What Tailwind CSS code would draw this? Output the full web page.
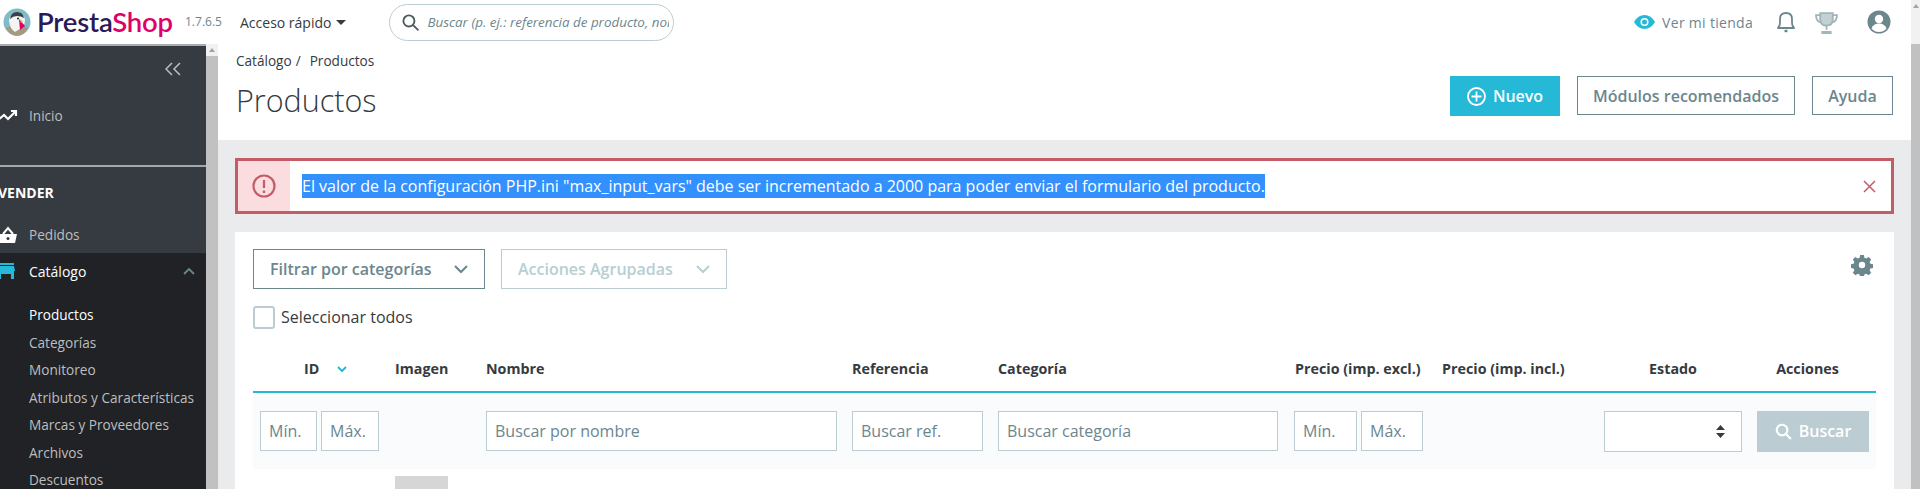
<!DOCTYPE html>
<html lang="es">
<head>
    <meta charset="UTF-8">
    <meta name="viewport" content="width=device-width, initial-scale=1.0">
    <title>Productos - PrestaShop</title>
    <script src="https://cdn.jsdelivr.net/npm/@tailwindcss/browser@4"></script>
</head>
<body class="h-[489px] overflow-hidden bg-white font-['Open_Sans',sans-serif] text-[#363a41]">
    <!-- Top bar -->
    <header class="flex h-[44px] items-center bg-white">
        <svg class="ml-[3px] h-[28px] w-[28px] shrink-0" viewBox="0 0 28 28">
            <circle cx="14" cy="14" r="13.5" fill="#7fbcc6"/>
            <path d="M3 20q11-6 22 0q-4 8-11 8t-11-8z" fill="#a39a80"/>
            <path d="M6 13q1-8 8-8t8 7q0 4-2 7l-8 5q-5-3-6-11z" fill="#f4f4f4"/>
            <path d="M7 11q1-7 7-7t7 6q-3-2-7-2t-7 3z" fill="#3d3f47"/>
            <path d="M16 11l6 7-5 4z" fill="#df0067"/>
            <path d="M17 11l3 3-2 1z" fill="#f5a623"/>
            <circle cx="15" cy="10.5" r="1" fill="#222"/>
        </svg>
        <div class="ml-[6px] w-[136px] font-['Lato',sans-serif] text-[27.500px] leading-[32px] font-semibold tracking-[-0.2px] whitespace-nowrap text-[#2b1a5a]">Presta<span class="text-[#df0067]">Shop</span></div>
        <span class="ml-[12px] w-[36px] text-[12px] whitespace-nowrap text-[#6c868e]">1.7.6.5</span>
        <span class="ml-[19px] text-[14px] whitespace-nowrap">Acceso rápido</span>
        <svg class="ml-[5px] h-[5px] w-[10px]" viewBox="0 0 10 5"><path d="M0 0h10L5 5z" fill="#363a41"/></svg>
        <div class="ml-[43px] flex h-[37px] w-[285px] items-center overflow-hidden rounded-full border border-[#bbcdd2] pr-[4px] pl-[11px]">
            <svg class="h-[19px] w-[19px] shrink-0" viewBox="0 0 24 24" fill="none" stroke="#4f5b60" stroke-width="2.4"><circle cx="10" cy="10" r="7"/><path d="M15 15l7 7"/></svg>
            <span class="ml-[7px] overflow-hidden text-[13.400px] whitespace-nowrap text-[#6c868e] italic">Buscar (p. ej.: referencia de producto, nombre de cliente…)</span>
        </div>
        <div class="ml-auto flex items-center">
            <svg class="h-[14px] w-[21px]" viewBox="0 0 21 14"><path d="M0 7q4-7 10.500-7T21 7q-4 7-10.500 7T0 7z" fill="#25b9d7"/><circle cx="10.500" cy="7" r="4" fill="#fff"/><circle cx="10.500" cy="7" r="2.500" fill="#25b9d7"/></svg>
            <span class="ml-[7px] text-[14px] tracking-[0.3px] whitespace-nowrap text-[#6c868e]">Ver mi tienda</span>
            <svg class="ml-[24px] h-[22px] w-[18px]" viewBox="0 0 18 22" fill="none" stroke="#6c868e" stroke-width="1.800"><path d="M1 17q2-2 2-5V8q0-6 6-6t6 6v4q0 3 2 5z" stroke-linejoin="round"/><path d="M7.500 20h3" stroke-width="2.400"/></svg>
            <svg class="ml-[20px] h-[23px] w-[23px]" viewBox="0 0 22 22" fill="none" stroke="#a3b5ba" stroke-width="1.800"><path d="M5 2h12v6q0 6-6 6t-6-6z" fill="#c3d0d4"/><path d="M5 4H1q0 6 5 7M17 4h4q0 6-5 7M11 14v4M7 20h8v1H7z"/></svg>
            <svg class="mr-[20px] ml-[29px] h-[24px] w-[24px]" viewBox="0 0 24 24"><circle cx="12" cy="12" r="11.500" fill="#6c868e"/><circle cx="12" cy="9" r="4.200" fill="#fff"/><path d="M4.500 18.500q2-5 7.500-5t7.500 5q-3 3.500-7.500 3.500t-7.500-3.500z" fill="#fff"/></svg>
        </div>
        <div class="flex h-[44px] w-[9px] shrink-0 justify-center bg-[#f1f1f1] pt-[4px]">
            <svg class="h-[4px] w-[6px]" viewBox="0 0 6 4"><path d="M0 4l3-4 3 4z" fill="#a3a3a3"/></svg>
        </div>
    </header>

    <div class="flex h-[445px]">
        <!-- Sidebar -->
        <aside class="w-[206px] shrink-0 overflow-hidden border-t-2 border-[#a9adb0] bg-[#363a41] text-[13.600px] text-[#bebebe]">
            <div class="flex h-[30px] items-end justify-end pr-[25px]">
                <svg class="h-[14px] w-[16px]" viewBox="0 0 16 14" fill="none" stroke="#bebebe" stroke-width="1.500"><path d="M7 1L1 7l6 6M15 1L9 7l6 6"/></svg>
            </div>
            <div class="mt-[26px] flex h-[28px] items-center">
                <svg class="h-[12px] w-[18px] shrink-0" viewBox="0 0 18 12" fill="none" stroke="#fff" stroke-width="2.200"><path d="M-2 10l6-5 4 4 7-7M11 1h5v5"/></svg>
                <span class="ml-[11px]">Inicio</span>
            </div>
            <div class="mt-[35px] h-[2px] bg-[#a0aaae]"></div>
            <div class="mt-[16px] -ml-[2px] h-[20px] text-[14px] leading-[20px] font-bold text-white">VENDER</div>
            <div class="mt-[22px] flex h-[20px] items-center">
                <svg class="h-[18px] w-[18px] shrink-0" viewBox="0 0 18 18"><path d="M-2 8h19l-2 9H0z" fill="#fff"/><path d="M3 8l5-6 5 6" fill="none" stroke="#fff" stroke-width="2"/><circle cx="8" cy="12.500" r="1.500" fill="#363a41"/></svg>
                <span class="ml-[11px]">Pedidos</span>
            </div>
            <div class="mt-[8px] h-[240px] bg-[#202226]">
                <div class="flex h-[36px] items-center text-white">
                    <svg class="h-[16px] w-[16px] shrink-0" viewBox="0 0 16 16"><path d="M-2 0h16v2H-2zM-2 3h16l1 5H-2z" fill="#25b9d7"/><path d="M-1 8h2v8h-2zM11 8h3v8h-3zM1 8h10v3H1z" fill="#25b9d7"/></svg>
                    <span class="ml-[13px] text-[14px]">Catálogo</span>
                    <svg class="mr-[11px] ml-auto h-[7px] w-[12px]" viewBox="0 0 12 7" fill="none" stroke="#6c868e" stroke-width="1.800"><path d="M1 6l5-5 5 5"/></svg>
                </div>
                <div class="mt-[12px] flex flex-col pl-[29px] leading-[27.500px] whitespace-nowrap">
                    <span class="text-white">Productos</span>
                    <span>Categorías</span>
                    <span>Monitoreo</span>
                    <span>Atributos y Características</span>
                    <span>Marcas y Proveedores</span>
                    <span>Archivos</span>
                    <span>Descuentos</span>
                </div>
            </div>
        </aside>
        <!-- Sidebar scrollbar -->
        <div class="flex w-[12px] shrink-0 flex-col bg-[#f1f1f1]">
            <div class="flex h-[12px] justify-center pt-[4px]">
                <svg class="h-[4px] w-[6px]" viewBox="0 0 6 4"><path d="M0 4l3-4 3 4z" fill="#a3a3a3"/></svg>
            </div>
            <div class="flex-1 bg-[#c1c1c1]"></div>
        </div>

        <!-- Main -->
        <main class="flex w-[1693px] shrink-0 flex-col bg-[#eaebec]">
            <div class="flex h-[96px] shrink-0 justify-between bg-white px-[18px]">
                <div>
                    <div class="mt-[7px] flex h-[20px] items-center text-[13.600px]">Catálogo<span class="mr-[9px] ml-[4px]">/</span>Productos</div>
                    <h1 class="mt-[9px] text-[30.500px] leading-[40px] font-light">Productos</h1>
                </div>
                <div class="flex items-start gap-[17px] pt-[32px] text-[16px] font-semibold">
                    <div class="flex h-[40px] w-[110px] items-center justify-center gap-[7px] bg-[#25b9d7] text-white">
                        <svg class="h-[19px] w-[19px]" viewBox="0 0 19 19" fill="none" stroke="#fff" stroke-width="1.800"><circle cx="9.500" cy="9.500" r="8.500"/><path d="M9.500 4.500v10M4.500 9.500h10"/></svg>
                        Nuevo
                    </div>
                    <div class="flex h-[39px] w-[218px] items-center justify-center border border-[#6c868e] text-[#6c868e]">Módulos recomendados</div>
                    <div class="flex h-[39px] w-[81px] items-center justify-center border border-[#6c868e] text-[#6c868e]">Ayuda</div>
                </div>
            </div>

            <div class="px-[17px] pt-[18px]">
                <!-- Alert -->
                <div class="flex h-[56px] items-center border-[3px] border-[#c45c67] bg-white">
                    <div class="flex h-full w-[52px] items-center justify-center bg-[#fbdcdf]">
                        <svg class="h-[24px] w-[24px]" viewBox="0 0 24 24" fill="none" stroke="#c45c67" stroke-width="2.200"><circle cx="12" cy="12" r="10.500"/><path d="M12 6v8M12 16.500v2.500"/></svg>
                    </div>
                    <span class="ml-[12px] bg-[#3390ff] text-[16px] leading-[24px] tracking-[-0.01px] whitespace-nowrap text-white">El valor de la configuración PHP.ini "max_input_vars" debe ser incrementado a 2000 para poder enviar el formulario del producto.</span>
                    <svg class="mr-[15px] ml-auto h-[13px] w-[13px]" viewBox="0 0 13 13" fill="none" stroke="#c45c67" stroke-width="1.500"><path d="M1 1l11 11M12 1L1 12"/></svg>
                </div>

                <!-- Products card -->
                <div class="mt-[18px] h-[257px] overflow-hidden bg-white px-[18px] pt-[17px]">
                    <div class="flex items-start">
                        <div class="flex h-[40px] w-[232px] items-center justify-between border border-[#6c868e] pr-[16px] pl-[16px] text-[16px] font-semibold text-[#6c868e]">
                            Filtrar por categorías
                            <svg class="h-[9px] w-[14px]" viewBox="0 0 14 9" fill="none" stroke="#6c868e" stroke-width="2"><path d="M1 1l6 6 6-6"/></svg>
                        </div>
                        <div class="ml-[16px] flex h-[40px] w-[226px] items-center justify-between border border-[#bbcdd2] px-[16px] text-[16px] font-semibold text-[#b7ced3]">
                            Acciones Agrupadas
                            <svg class="h-[9px] w-[14px]" viewBox="0 0 14 9" fill="none" stroke="#b7ced3" stroke-width="2"><path d="M1 1l6 6 6-6"/></svg>
                        </div>
                        <svg class="mt-[5px] mr-[3px] ml-auto h-[22px] w-[22px]" viewBox="0 0 24 24" fill="#6c868e"><path d="M10 1h4l.6 3 2 .9 2.600-1.700 2.800 2.800-1.700 2.600.9 2 3 .6v4l-3 .6-.9 2 1.700 2.600-2.800 2.800-2.600-1.700-2 .9-.6 3h-4l-.6-3-2-.9-2.600 1.700-2.800-2.800 1.700-2.600-.9-2-3-.6v-4l3-.6.9-2L2 6l2.800-2.800 2.600 1.700 2-.9zM12 8.500a3.500 3.500 0 100 7 3.500 3.500 0 000-7z" fill-rule="evenodd"/></svg>
                    </div>
                    <div class="mt-[17px] flex h-[23px] items-center">
                        <div class="h-[23px] w-[22px] rounded-[3px] border-2 border-[#bbcdd2]"></div>
                        <span class="ml-[6px] pb-[2px] text-[16px]">Seleccionar todos</span>
                    </div>

                    <!-- Table head -->
                    <div class="mt-[20px] grid h-[44px] grid-cols-[142px_91px_366px_146px_297px_147px_162px_153px_119px] items-center border-b-2 border-[#25b9d7] pb-[2px] text-[14.300px] font-bold whitespace-nowrap">
                        <div class="flex items-center pl-[51px]">ID<svg class="ml-[18px] h-[6px] w-[10px]" viewBox="0 0 10 6" fill="none" stroke="#25b9d7" stroke-width="2"><path d="M1 1l4 4 4-4"/></svg></div>
                        <div>Imagen</div>
                        <div>Nombre</div>
                        <div>Referencia</div>
                        <div>Categoría</div>
                        <div>Precio (imp. excl.)</div>
                        <div>Precio (imp. incl.)</div>
                        <div class="pr-[15px] text-center">Estado</div>
                        <div class="pr-[18px] text-center">Acciones</div>
                    </div>

                    <!-- Filter row -->
                    <div class="grid h-[76px] grid-cols-[142px_91px_366px_146px_297px_147px_162px_153px_119px] items-center bg-[#fafbfc] text-[16px] text-[#6c868e]">
                        <div class="flex gap-[4px] pl-[7px]">
                            <div class="flex h-[40px] w-[57px] items-center border border-[#bbcdd2] bg-white pl-[8px]">Mín.</div>
                            <div class="flex h-[40px] w-[58px] items-center border border-[#bbcdd2] bg-white pl-[8px]">Máx.</div>
                        </div>
                        <div></div>
                        <div class="flex h-[40px] w-[351px] items-center border border-[#bbcdd2] bg-white pl-[8px]">Buscar por nombre</div>
                        <div class="flex h-[40px] w-[131px] items-center border border-[#bbcdd2] bg-white pl-[8px]">Buscar ref.</div>
                        <div class="flex h-[40px] w-[280px] items-center border border-[#bbcdd2] bg-white pl-[8px]">Buscar categoría</div>
                        <div class="-ml-[1px] flex gap-[4px]">
                            <div class="flex h-[40px] w-[63px] items-center border border-[#bbcdd2] bg-white pl-[8px]">Mín.</div>
                            <div class="flex h-[40px] w-[62px] items-center border border-[#bbcdd2] bg-white pl-[8px]">Máx.</div>
                        </div>
                        <div></div>
                        <div class="flex h-[41px] w-[138px] items-center justify-end border border-[#bbcdd2] bg-white pr-[16px]">
                            <svg class="h-[13px] w-[9px]" viewBox="0 0 9 13" fill="#363a41"><path d="M0 5l4.500-5L9 5zM0 8l4.500 5L9 8z"/></svg>
                        </div>
                        <div class="flex h-[41px] w-[112px] items-center justify-center gap-[7px] bg-[#bbcdd2] font-semibold text-white">
                            <svg class="h-[17px] w-[17px]" viewBox="0 0 24 24" fill="none" stroke="#fff" stroke-width="3"><circle cx="10" cy="10" r="7.500"/><path d="M15.500 15.500l7 7"/></svg>
                            Buscar
                        </div>
                    </div>

                    <!-- First row, image placeholder -->
                    <div class="mt-[7px] ml-[142px] h-[20px] w-[53px] bg-[#d6d6d6]"></div>
                </div>
            </div>
        </main>

        <!-- Page scrollbar -->
        <div class="w-[9px] shrink-0 bg-[#c1c1c1]"></div>
    </div>
</body>
</html>
